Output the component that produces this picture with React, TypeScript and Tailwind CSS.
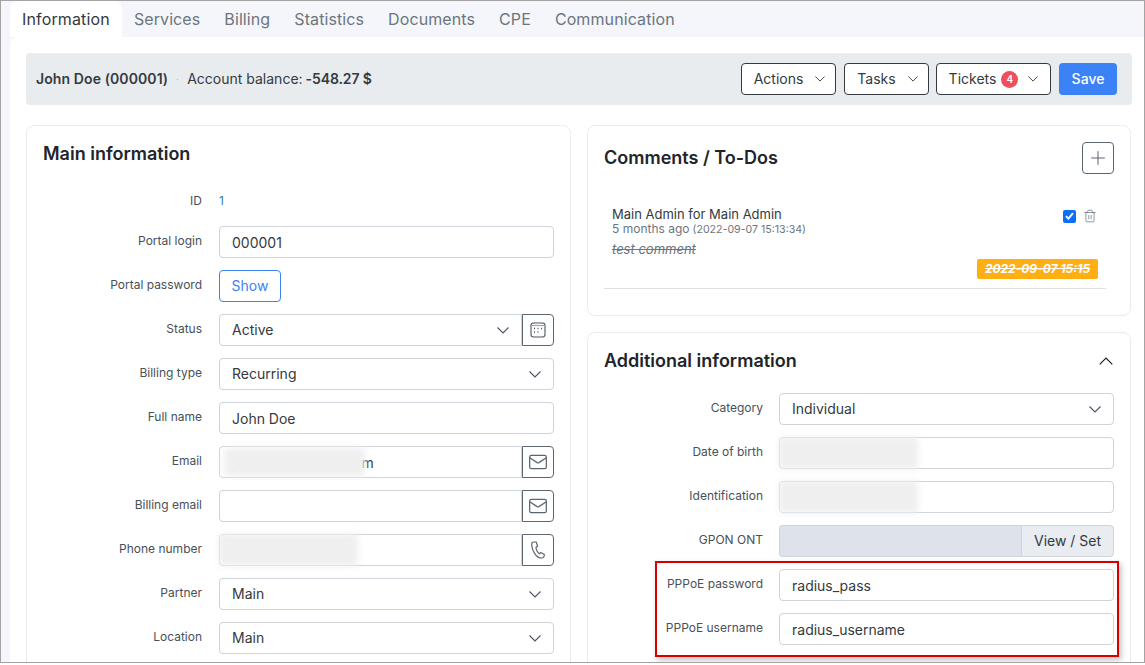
import React from "react";
import { Mail, Plus, Trash2 } from "lucide-react";

function Chevron({ up = false, className = "" }: { up?: boolean; className?: string }) {
  return (
    <svg viewBox="0 0 12 7" fill="none" stroke="currentColor" strokeWidth="1.1" className={className}>
      <path d={up ? "M0.5 6.5 L6 1 L11.5 6.5" : "M0.5 0.5 L6 6 L11.5 0.5"} />
    </svg>
  );
}

function CalendarIcon() {
  return (
    <svg width="16" height="16" viewBox="0 0 16 16" fill="none" stroke="#4b5563" strokeWidth="1.1">
      <rect x="1" y="1" width="14" height="14" rx="2.5" />
      <path d="M1 3.5 H15" stroke="#9ca3af" />
      <path d="M4 6.5h1M7.5 6.5h1M11 6.5h1M4 10h1M7.5 10h1" strokeWidth="1.4" />
    </svg>
  );
}

function PhoneIcon() {
  return (
    <svg width="14" height="18" viewBox="0 0 14 18" fill="none" stroke="#5c6670" strokeWidth="1.2" strokeLinejoin="round">
      <path d="M2.5 1 C1.2 1 .7 2 .7 3.5 C.7 9 5 17 10.5 17 C12 17 13 16.2 13.2 15 L13.3 13.5 L9.8 11.5 L8.3 12.8 C6.6 11.8 5 8.5 5 6.3 L6.6 5.2 L5.2 1 Z" />
    </svg>
  );
}

function Row({ label, children, right = false }: { label: string; children: React.ReactNode; right?: boolean }) {
  return (
    <div className="mb-3 flex h-8">
      <div className="w-[159px] shrink-0 pt-[7px] text-right text-xs leading-4 text-[#495057]">{label}</div>
      <div className={`relative flex min-w-0 flex-1 ${right ? "ml-4" : "ml-[17px]"}`}>{children}</div>
    </div>
  );
}

function Field({ value = "", addon }: { value?: string; addon?: React.ReactNode }) {
  return (
    <>
      <input
        readOnly
        value={value}
        className={`h-8 min-w-0 flex-1 border border-[#ced4da] bg-white px-3 text-sm text-[#343a40] outline-none ${addon ? "rounded-l" : "rounded"}`}
      />
      {addon && <Addon>{addon}</Addon>}
    </>
  );
}

function Addon({ children }: { children: React.ReactNode }) {
  return (
    <div className="flex h-8 w-8 shrink-0 items-center justify-center rounded-r border border-[#5c6670] bg-white">
      {children}
    </div>
  );
}

function Select({ value, addon }: { value: string; addon?: React.ReactNode }) {
  return (
    <>
      <div
        className={`flex h-8 min-w-0 flex-1 items-center justify-between border border-[#ced4da] bg-white pl-3 pr-3 text-sm text-[#343a40] ${addon ? "rounded-l" : "rounded"}`}
      >
        <span>{value}</span>
        <Chevron className="h-[7px] w-[12px] text-[#4b5563]" />
      </div>
      {addon && <Addon>{addon}</Addon>}
    </>
  );
}

function Blur({ className }: { className: string }) {
  return <div className={`absolute bg-[#efefef] blur-[3px] ${className}`} />;
}

function OutlineButton({ children, className }: { children: React.ReactNode; className: string }) {
  return (
    <button className={`flex h-8 items-center justify-center rounded border border-[#343a40] bg-white text-sm text-[#343a40] ${className}`}>
      {children}
    </button>
  );
}

const tabs = ["Services", "Billing", "Statistics", "Documents", "CPE", "Communication"];

export default function App() {
  return (
    <div className="h-[665px] w-[1145px] overflow-hidden bg-white font-['Inter',sans-serif]">
      <div className="flex h-[663px] flex-col overflow-hidden border border-[#a3a3a3] bg-[#f4f6fb]">
        <div className="flex h-9 shrink-0 pl-[9px] text-base leading-9 tracking-[0.1px] text-[#6c757d]">
          <div className="rounded-t-lg bg-white px-3 tracking-[0.15px] text-[#343a40]">Information</div>
          {tabs.map((t) => (
            <div key={t} className="px-3">{t}</div>
          ))}
        </div>

        <div className="relative ml-[9px] flex-1 overflow-hidden rounded-tl-lg bg-white pl-4 pr-[12px] pt-4">
          <div className="mb-5 flex h-[52px] items-center justify-between rounded bg-[#e9ecef] pl-[10px] pr-[15px] text-sm text-[#343a40]">
            <div className="flex items-center">
              <span className="font-semibold tracking-[0.1px]">John Doe (000001)</span>
              <span className="mx-[9px] h-[1px] w-[1px] bg-[#adb5bd]" />
              <span>Account balance:</span>
              <span className="ml-[3px] font-semibold tracking-[-0.1px]">-548.27 $</span>
            </div>
            <div className="flex items-center gap-2">
              <OutlineButton className="w-[95px] gap-3 pl-[2px]">Actions<Chevron className="h-[6px] w-[10px]" /></OutlineButton>
              <OutlineButton className="w-[85px] gap-3 pl-[2px]">Tasks<Chevron className="h-[6px] w-[10px]" /></OutlineButton>
              <OutlineButton className="-ml-[1px] w-[115px]">
                Tickets
                <span className="ml-[5px] flex h-[17px] w-[17px] items-center justify-center rounded-full bg-[#ef4f5a] text-[10px] font-semibold text-white">4</span>
                <Chevron className="ml-[10px] h-[6px] w-[10px]" />
              </OutlineButton>
              <button className="h-8 w-[58px] rounded bg-[#3b82f6] text-sm font-medium text-white">Save</button>
            </div>
          </div>

          <div className="grid grid-cols-[545px_544px] gap-4">
            <div className="h-[600px] rounded-lg border border-[#e9ecef] px-4 pt-[14px]">
              <h2 className="h-7 text-lg font-semibold leading-7 text-[#212529]">Main information</h2>
              <div className="mb-[15px] mt-[23px] flex h-5 items-center text-xs text-[#495057]">
                <div className="w-[159px] text-right">ID</div>
                <div className="ml-[17px] text-[#2f7dbd]">1</div>
              </div>
              <Row label="Portal login"><Field value="000001" /></Row>
              <Row label="Portal password">
                <button className="h-8 w-[62px] rounded border border-[#3b82f6] bg-white text-sm text-[#3b82f6]">Show</button>
              </Row>
              <Row label="Status"><Select value="Active" addon={<CalendarIcon />} /></Row>
              <Row label="Billing type"><Select value="Recurring" /></Row>
              <Row label="Full name"><Field value="John Doe" /></Row>
              <Row label="Email">
                <Field value="j                                m" addon={<Mail size={20} strokeWidth={1.5} className="text-[#5c6670]" />} />
                <Blur className="left-[5px] top-[2px] h-[28px] w-[141px]" />
              </Row>
              <Row label="Billing email">
                <Field addon={<Mail size={20} strokeWidth={1.5} className="text-[#5c6670]" />} />
              </Row>
              <Row label="Phone number">
                <Field addon={<PhoneIcon />} />
                <Blur className="left-0 top-0 h-8 w-[139px]" />
              </Row>
              <Row label="Partner"><Select value="Main" /></Row>
              <Row label="Location"><Select value="Main" /></Row>
            </div>

            <div className="flex flex-col gap-4">
              <div className="h-[191px] shrink-0 rounded-lg border border-[#e9ecef] px-4 pt-4">
                <div className="flex items-center justify-between">
                  <h2 className="text-lg font-semibold text-[#212529]">Comments / To-Dos</h2>
                  <button className="flex h-8 w-8 items-center justify-center rounded border border-[#5c6670] bg-white text-[#4b5563]">
                    <Plus size={22} strokeWidth={1} />
                  </button>
                </div>
                <div className="relative mr-2 mt-8 h-[83px] border-b border-[#dee2e6] px-2">
                  <div className="text-[13px] leading-4 text-[#343a40]">Main Admin for Main Admin</div>
                  <div className="-mt-[1px] text-[11px] leading-[14px] text-[#6c757d]">
                    <span className="text-xs">5 months ago</span> <span className="text-[10.6px]">(2022-09-07 15:13:34)</span>
                  </div>
                  <div className="mt-[4px] text-[13px] italic leading-4 text-[#6c757d] line-through">test comment</div>
                  <div className="absolute right-[10px] top-[3px] flex items-center gap-2">
                    <span className="flex h-[13px] w-[13px] items-center justify-center rounded-[2px] bg-[#0d6efd]">
                      <svg width="9" height="8" viewBox="0 0 9 8" fill="none" stroke="white" strokeWidth="1.8"><path d="M1 4.2 L3.4 6.6 L8 1.2" /></svg>
                    </span>
                    <Trash2 size={14} strokeWidth={1} className="-mx-[1px] text-[#3f5068]" />
                  </div>
                  <div className="absolute right-2 top-[53px] flex h-5 w-[121px] items-center justify-center rounded-[2px] bg-[#ffae14] text-xs font-bold italic text-white line-through">
                    2022-09-07 15:15
                  </div>
                </div>
              </div>

              <div className="h-[400px] rounded-lg border border-[#e9ecef] px-4 pt-[14px]">
                <div className="mb-[18px] flex h-7 items-center justify-between">
                  <h2 className="text-lg font-semibold text-[#212529]">Additional information</h2>
                  <Chevron up className="mr-[1px] h-[8px] w-[14px] text-[#212529]" />
                </div>
                <Row right label="Category"><Select value="Individual" /></Row>
                <Row right label="Date of birth">
                  <Field />
                  <Blur className="left-0 top-0 h-8 w-[139px]" />
                </Row>
                <Row right label="Identification">
                  <Field />
                  <Blur className="left-0 top-0 h-8 w-[139px]" />
                </Row>
                <Row right label="GPON ONT">
                  <div className="h-8 flex-1 rounded-l border border-r-0 border-[#ced4da] bg-[#dee2eb]" />
                  <div className="flex h-8 w-[93px] items-center justify-center rounded-r border border-[#ced4da] bg-[#e9ecf1] text-sm text-[#343a40]">View / Set</div>
                </Row>
                <Row right label="PPPoE password"><Field value="radius_pass" /></Row>
                <Row right label="PPPoE username"><Field value="radius_username" /></Row>
              </div>
            </div>
          </div>

          <div className="absolute left-[645px] top-[524px] h-[96px] w-[464px] border-2 border-[#d60000] shadow-[2px_3px_6px_rgba(0,0,0,0.25)]" />
        </div>
      </div>
    </div>
  );
}
